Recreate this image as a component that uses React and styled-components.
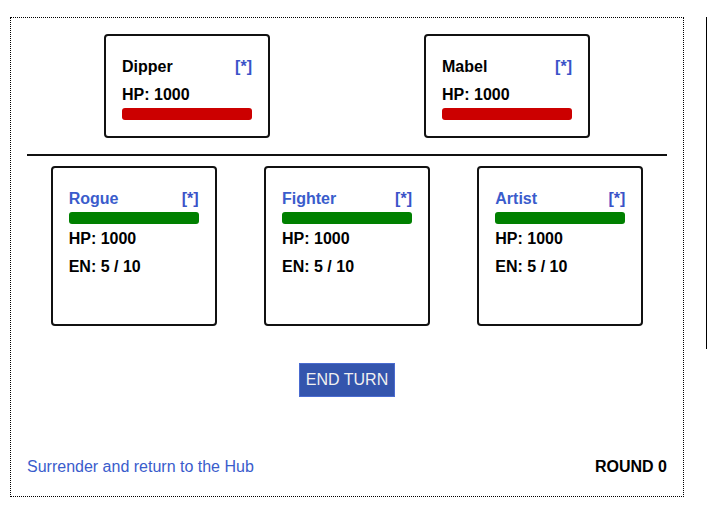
import React from "react";
import styled, { createGlobalStyle } from "styled-components";

const enemies = [
  { name: "Dipper", hp: 1000 },
  { name: "Mabel", hp: 1000 },
];

const party = [
  { name: "Rogue", hp: 1000, en: 5, maxEn: 10 },
  { name: "Fighter", hp: 1000, en: 5, maxEn: 10 },
  { name: "Artist", hp: 1000, en: 5, maxEn: 10 },
];

const GlobalStyle = createGlobalStyle`
  html, body {
    overflow: hidden;
  }
  body {
    margin: 8px;
    background: #fff;
    color: #000;
    font-family: "Liberation Sans", Arial, sans-serif;
    font-size: 16px;
  }
`;

const App = () => {
  return (
    <>
      <GlobalStyle />
      <Layout>
        <Battle>
          <EnemyRow>
            {enemies.map((enemy) => (
              <Slot key={enemy.name}>
                <Card>
                  <CardHead>
                    <Name>{enemy.name}</Name>
                    <Target>[*]</Target>
                  </CardHead>
                  <Stat>HP: {enemy.hp}</Stat>
                  <Bar $color="#cc0000" />
                </Card>
              </Slot>
            ))}
          </EnemyRow>
          <Divider />
          <PartyRow>
            {party.map((hero) => (
              <Slot key={hero.name}>
                <Card>
                  <CardHead>
                    <Name $ally>{hero.name}</Name>
                    <Target>[*]</Target>
                  </CardHead>
                  <Bar $color="#008000" />
                  <Stat>HP: {hero.hp}</Stat>
                  <Stat>
                    EN: {hero.en} / {hero.maxEn}
                  </Stat>
                  <Stat />
                </Card>
              </Slot>
            ))}
          </PartyRow>
          <Actions>
            <EndTurn>END TURN</EndTurn>
          </Actions>
          <Footer>
            <Surrender href="#">Surrender and return to the Hub</Surrender>
            <Round>ROUND 0</Round>
          </Footer>
        </Battle>
        <Side />
      </Layout>
    </>
  );
};

export default App;

const Layout = styled.div`
  display: flex;
  align-items: flex-start;
  padding: 9px 0 0 2px;
`;

const Battle = styled.div`
  box-sizing: border-box;
  width: 674px;
  flex-shrink: 0;
  border: 1px dotted #000;
  padding: 16px;
  display: flex;
  flex-direction: column;
`;

const Side = styled.div`
  flex-shrink: 0;
  width: 9px;
  height: 332px;
  margin-left: 22px;
  border-left: 1px solid #000;
`;

const EnemyRow = styled.div`
  display: grid;
  grid-template-columns: repeat(2, 1fr);
`;

const PartyRow = styled.div`
  display: grid;
  grid-template-columns: repeat(3, 1fr);
  margin-top: 10px;
`;

const Slot = styled.div`
  display: flex;
  justify-content: center;
`;

const Card = styled.div`
  box-sizing: border-box;
  width: 166px;
  border: 2px solid #111;
  border-radius: 4px;
  padding: 16px;
  font-weight: bold;
`;

const CardHead = styled.div`
  display: flex;
  justify-content: space-between;
  padding-top: 1px;
  line-height: 27px;
`;

const Name = styled.span`
  color: ${(p) => (p.$ally ? "#3a5ccc" : "#000")};
`;

const Target = styled.span`
  color: #3a52c8;
  cursor: pointer;
`;

const Stat = styled.div`
  padding-top: 1px;
  line-height: 27px;
  min-height: 27px;
`;

const Bar = styled.div`
  height: 12px;
  border-radius: 3px;
  background: ${(p) => p.$color};
`;

const Divider = styled.div`
  height: 2px;
  background: #111;
  margin-top: 16px;
`;

const Actions = styled.div`
  display: flex;
  justify-content: center;
  margin-top: 37px;
`;

const EndTurn = styled.button`
  font-family: "Liberation Sans", Arial, sans-serif;
  font-size: 16px;
  line-height: 18px;
  color: #f0f0f0;
  background: #3455ad;
  border: 1px solid #4a6bd0;
  border-radius: 0;
  padding: 7px 6px;
  cursor: pointer;
`;

const Footer = styled.div`
  display: flex;
  justify-content: space-between;
  padding-top: 1px;
  line-height: 27px;
  margin-top: 55px;
`;

const Surrender = styled.a`
  color: #3a5ccc;
  text-decoration: none;
`;

const Round = styled.span`
  font-weight: bold;
`;
